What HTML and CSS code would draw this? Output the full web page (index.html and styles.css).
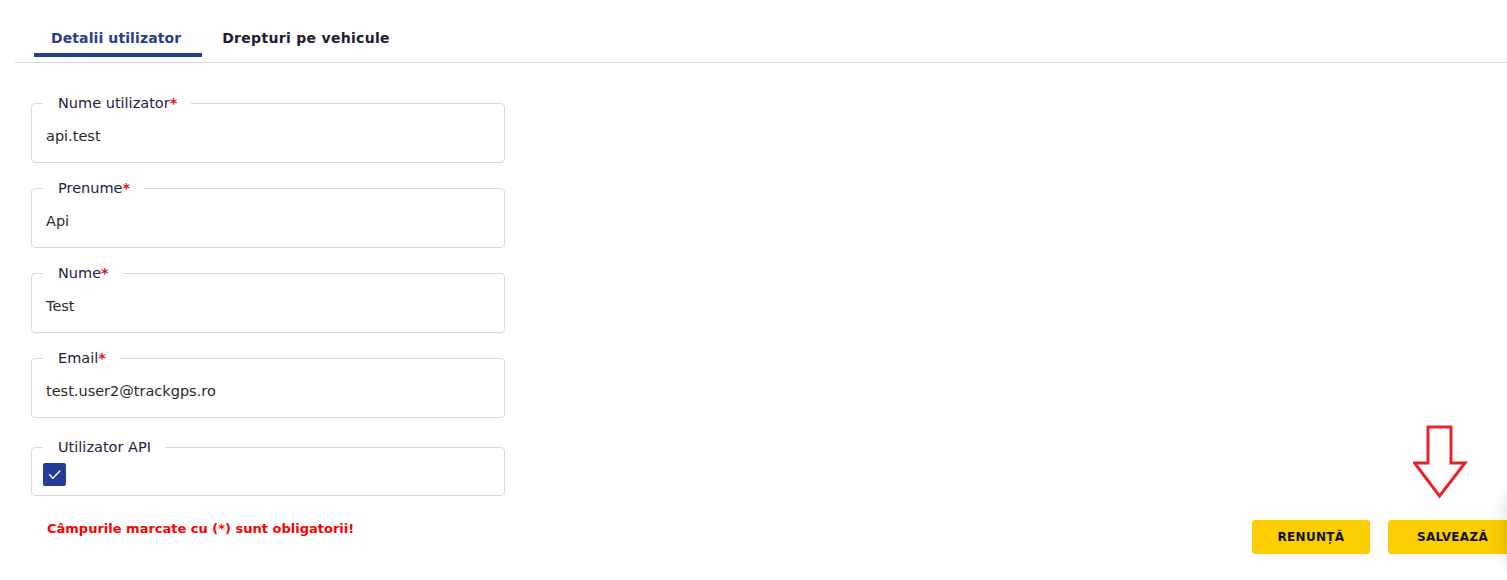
FILE: index.html
```html
<!DOCTYPE html>
<html lang="ro">
<head>
<meta charset="utf-8">
<title>Detalii utilizator</title>
<link rel="stylesheet" href="styles.css">
</head>
<body>
<div class="page">
  <nav class="tabs">
    <a class="tab active">Detalii utilizator</a>
    <a class="tab">Drepturi pe vehicule</a>
  </nav>
  <form class="form">
    <fieldset class="field">
      <legend>Nume utilizator<span class="req">*</span></legend>
      <div class="value">api.test</div>
    </fieldset>
    <fieldset class="field">
      <legend>Prenume<span class="req">*</span></legend>
      <div class="value">Api</div>
    </fieldset>
    <fieldset class="field">
      <legend>Nume<span class="req">*</span></legend>
      <div class="value">Test</div>
    </fieldset>
    <fieldset class="field">
      <legend>Email<span class="req">*</span></legend>
      <div class="value">test.user2@trackgps.ro</div>
    </fieldset>
    <fieldset class="field field-check">
      <legend>Utilizator API</legend>
      <span class="checkbox">
        <svg width="23" height="23" viewBox="0 0 23 23"><path d="M6.5 11.8 L10 15.2 L16.8 8" fill="none" stroke="#fff" stroke-width="1.4" stroke-linecap="round" stroke-linejoin="round"/></svg>
      </span>
    </fieldset>
    <div class="footer">
      <p class="error">Câmpurile marcate cu (*) sunt obligatorii!</p>
      <div class="actions">
        <button type="button" class="btn">RENUNȚĂ</button>
        <button type="button" class="btn">SALVEAZĂ</button>
      </div>
    </div>
  </form>
  <svg class="arrow" width="58" height="76" viewBox="0 0 58 76">
    <path d="M15 2 H38 V38 H52 L26.5 71 L1.5 38 H15 Z" fill="none" stroke="#e8232b" stroke-width="3" stroke-linejoin="miter"/>
  </svg>
  <div class="edge-shadow"></div>
</div>
</body>
</html>
```
FILE: styles.css
```css
html, body {
  margin: 0;
  padding: 0;
  background: #fff;
  overflow: hidden;
}
body {
  font-family: "DejaVu Sans", "Noto Sans", sans-serif;
  color: #222;
}
.page {
  position: relative;
  width: 1517px;
  height: 580px;
}
.tabs {
  display: flex;
  margin-left: 15px;
  padding-left: 19px;
  padding-bottom: 5px;
  border-bottom: 1px solid #d6d6d6;
}
.tab {
  display: block;
  padding: 28px 21px 5px 17px;
  line-height: 20px;
  font-size: 14px;
  font-weight: 600;
  color: #1b2036;
  border-bottom: 4px solid transparent;
  letter-spacing: 0.1px;
}
.tab.active {
  color: #2a3d8c;
  border-bottom-color: #233d94;
}
.tab + .tab {
  padding-left: 20px;
  letter-spacing: 0.3px;
}
.form {
  padding-left: 31px;
  padding-top: 32px;
  width: 474px;
}
.field {
  margin: 0 0 17px;
  padding: 15px 14px 16px;
  border: 1px solid #d9d9d9;
  border-radius: 4px;
  min-width: 0;
  box-sizing: border-box;
  width: 474px;
}
.field legend {
  margin-left: -3px;
  padding: 0 14px 0 15px;
  font-size: 14.5px;
  line-height: 16px;
  color: #1d2440;
}
.req {
  color: #e0141e;
  font-weight: 700;
}
.value {
  font-size: 14.5px;
  line-height: 20px;
  color: #2a2a2a;
}
.field-check {
  margin-top: 21px;
  margin-bottom: 0;
  padding: 8px 11px 9px;
}
.field-check legend {
  margin-left: 0;
}
.checkbox {
  display: block;
  width: 23px;
  height: 23px;
  background: #253e95;
  border-radius: 2px;
}
.checkbox svg {
  display: block;
}
.footer {
  display: flex;
  justify-content: space-between;
  align-items: flex-start;
  margin-top: 24px;
  width: 1486px;
}
.error {
  margin: 0 0 0 16px;
  padding-top: 1px;
  font-size: 13px;
  line-height: 16px;
  font-weight: 700;
  color: #f00;
}
.actions {
  display: flex;
  gap: 18px;
}
.btn {
  height: 34px;
  border: none;
  border-radius: 3px;
  background: #fccd00;
  font-family: "DejaVu Sans", "Noto Sans", sans-serif;
  font-size: 12px;
  font-weight: 600;
  color: #111;
  padding: 0;
  letter-spacing: 0.3px;
}
.btn:first-child {
  width: 118px;
}
.btn:last-child {
  width: 129px;
}
.arrow {
  position: absolute;
  left: 1413px;
  top: 425px;
}
.edge-shadow {
  position: absolute;
  left: 1512px;
  top: 500px;
  width: 40px;
  height: 60px;
  box-shadow: 0 0 18px 4px rgba(0,0,0,0.18);
  background: #fff;
}
```
